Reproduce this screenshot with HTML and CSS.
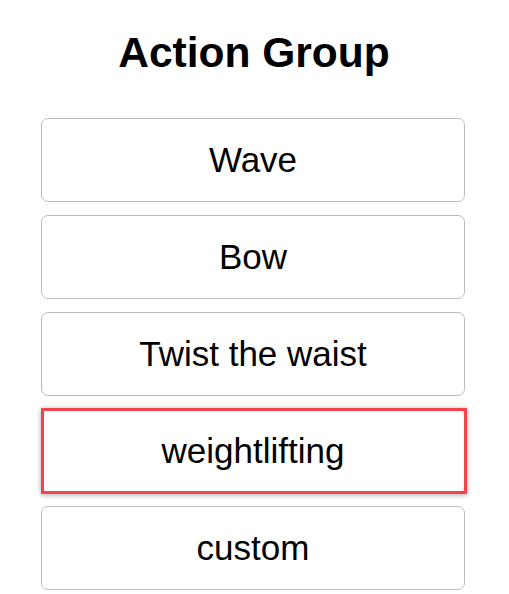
FILE: index.html
```html
<!DOCTYPE html>
<html>
<head>
<meta charset="utf-8">
<link rel="stylesheet" href="styles.css">
</head>
<body>
<div class="page">
  <h1 class="title">Action Group</h1>
  <div class="list">
    <button class="btn">Wave</button>
    <button class="btn">Bow</button>
    <button class="btn">Twist the waist</button>
    <button class="btn btn-hl">weightlifting</button>
    <button class="btn">custom</button>
  </div>
</div>
</body>
</html>
```
FILE: styles.css
```css
html, body {
  margin: 0;
  padding: 0;
  background: #ffffff;
}
.page {
  width: 509px;
  padding-top: 29px;
  font-family: "Liberation Sans", Arial, sans-serif;
  color: #000;
}
.title {
  margin: 0 0 41px 0;
  font-size: 42.5px;
  line-height: 48px;
  font-weight: bold;
  text-align: center;
  padding-right: 1px;
}
.list {
  display: flex;
  flex-direction: column;
  gap: 13px;
  margin-left: 41px;
  width: 424px;
}
.btn {
  display: block;
  box-sizing: border-box;
  width: 424px;
  height: 84px;
  margin: 0;
  padding: 0;
  background: #ffffff;
  border: 1px solid #bcbcbc;
  border-radius: 7px;
  font-family: "Liberation Sans", Arial, sans-serif;
  font-size: 35px;
  color: #000;
  text-align: center;
  line-height: 82px;
}
.btn-hl {
  position: relative;
}
.btn-hl::after {
  content: "";
  position: absolute;
  left: -1px;
  top: -2px;
  right: -3px;
  bottom: -2px;
  border: 3px solid #f2444a;
  box-shadow: 0 1px 5px rgba(0, 0, 0, 0.35);
  pointer-events: none;
}
```
